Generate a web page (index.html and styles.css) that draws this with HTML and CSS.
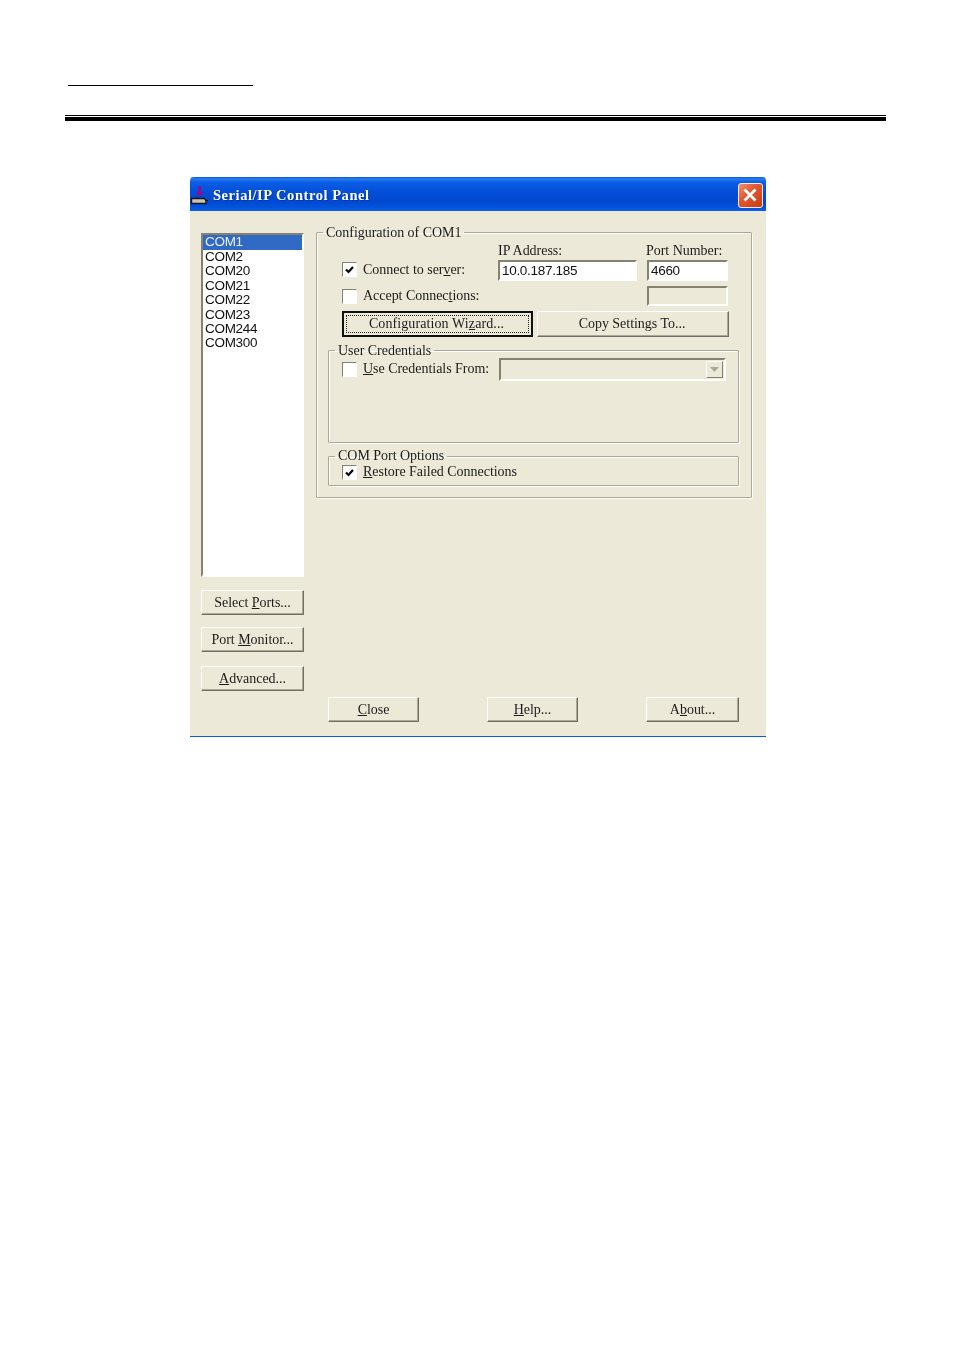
FILE: index.html
```html
<!DOCTYPE html>
<html lang="en">
<head>
<meta charset="utf-8">
<title>Serial/IP Control Panel</title>
<link rel="stylesheet" href="styles.css">
</head>
<body>
<div class="short-rule"></div>
<div class="double-rule"></div>
<div class="window">
  <div class="titlebar">
    <svg class="app-icon" viewBox="0 0 18 20" width="18" height="20">
      <path d="M8 1h3v6h2.500L9.500 12 5.500 7H8z" fill="#8b0f8f"/>
      <path d="M1.500 13.500h13l1.500 2.500v2.500H1.500z" fill="#c9c5ae" stroke="#15151f" stroke-width="1.400"/>
      <path d="M16 15.500h2" stroke="#15151f" stroke-width="1.200"/>
    </svg>
    <span class="title-text">Serial/IP Control Panel</span>
    <div class="close-btn">
      <svg viewBox="0 0 25 25" width="25" height="25">
        <path d="M7.500 7.500l9 9M16.500 7.500l-9 9" stroke="#fff" stroke-width="2.800" stroke-linecap="square"/>
      </svg>
    </div>
  </div>
  <div class="client">
    <div class="left-col">
      <div class="listbox">
        <div class="list-item selected">COM1</div>
        <div class="list-item">COM2</div>
        <div class="list-item">COM20</div>
        <div class="list-item">COM21</div>
        <div class="list-item">COM22</div>
        <div class="list-item">COM23</div>
        <div class="list-item">COM244</div>
        <div class="list-item">COM300</div>
      </div>
      <div class="btn side-one"><span>Select <u>P</u>orts...</span></div>
      <div class="btn side-two"><span>Port <u>M</u>onitor...</span></div>
      <div class="btn side-three"><span><u>A</u>dvanced...</span></div>
    </div>
    <div class="right-col">
      <fieldset class="group main-group">
        <legend>Configuration of COM1</legend>
        <div class="conn-grid">
          <div></div>
          <div class="field-label">IP Address:</div>
          <div class="field-label port-label">Port Number:</div>
          <label class="check-row row-one"><span class="check"><svg viewBox="0 0 11 11" width="11" height="11"><path d="M2 5.500l2.500 2.500 4.500-5" fill="none" stroke="#000" stroke-width="2.200"/></svg></span><span>Connect to ser<u>v</u>er:</span></label>
          <div class="input">10.0.187.185</div>
          <div class="input">4660</div>
          <label class="check-row row-two"><span class="check"></span><span>Accept Connec<u>t</u>ions:</span></label>
          <div class="row-two"></div>
          <div class="input disabled"></div>
        </div>
        <div class="wide-buttons">
          <div class="btn default"><span class="focus">Configuration Wi<u>z</u>ard...</span></div>
          <div class="btn copy"><span>Copy Settings To...</span></div>
        </div>
        <fieldset class="group cred-group">
          <legend>User Credentials</legend>
          <div class="cred-row">
            <label class="check-row"><span class="check"></span><span><u>U</u>se Credentials From:</span></label>
            <div class="combo">
              <div class="combo-arrow"><svg viewBox="0 0 9 5" width="9" height="5"><path d="M0 0h9L4.500 5z" fill="#aca899"/></svg></div>
            </div>
          </div>
        </fieldset>
        <fieldset class="group options-group">
          <legend>COM Port Options</legend>
          <label class="check-row"><span class="check"><svg viewBox="0 0 11 11" width="11" height="11"><path d="M2 5.500l2.500 2.500 4.500-5" fill="none" stroke="#000" stroke-width="2.200"/></svg></span><span><u>R</u>estore Failed Connections</span></label>
        </fieldset>
      </fieldset>
      <div class="bottom-buttons">
        <div class="btn bottom-narrow"><span><u>C</u>lose</span></div>
        <div class="btn bottom-narrow"><span><u>H</u>elp...</span></div>
        <div class="btn bottom-wide"><span>A<u>b</u>out...</span></div>
      </div>
    </div>
  </div>
</div>
</body>
</html>
```
FILE: styles.css
```css
* { box-sizing: border-box; }
html, body { margin: 0; padding: 0; background: #fff; }
body { height: 1350px; overflow: hidden; font-family: "Liberation Serif", serif; font-size: 14px; letter-spacing: -0.030px; color: #1c1c1c; }

.short-rule { width: 185px; height: 1px; margin: 85px 0 0 68px; background: #000; }
.double-rule { width: 821px; height: 6px; margin: 29px 0 0 65px; border-top: 1px solid #000; border-bottom: 4px solid #000; }

.window { width: 576px; height: 560px; margin: 56px 0 0 190px; background: #ece9d8; display: flex; flex-direction: column; border-bottom: 1px solid #0a5ce8; filter: blur(0.3px); }

.titlebar { height: 34px; flex: none; display: flex; align-items: center; padding-top: 2px; border-radius: 4px 4px 0 0;
  background: linear-gradient(to bottom, #0a5ad8 0, #2a7cf0 2px, #0a5fe6 5px, #0450d8 14px, #0048cf 24px, #0454de 31px, #0a62ea 34px); }
.app-icon { margin: 0 5px 0 0; }
.title-text { color: #fff; font-weight: bold; font-size: 14.500px; letter-spacing: 0.550px; flex: 1; text-shadow: 1px 1px 0 #0a3aa0; }
.close-btn { width: 25px; height: 25px; margin-right: 3px; border-radius: 3px; border: 1px solid #f4e8e0; background: linear-gradient(135deg, #ee9070 0, #e2592f 40%, #c93a14 100%); display: flex; align-items: center; justify-content: center; }
.close-btn svg { flex: none; }

.client { flex: 1; display: flex; padding: 13px 14px 0 11px; }
.left-col { width: 103px; flex: none; display: flex; flex-direction: column; margin-top: 9px; }
.right-col { flex: 1; margin-left: 12px; display: flex; flex-direction: column; }

.listbox { height: 344px; background: #fff; border: 2px solid; border-color: #85836f #fff #fff #85836f; }
.list-item { height: 14.400px; line-height: 14.400px; padding-left: 2px; color: #111; font-family: "Liberation Sans", sans-serif; font-size: 13.500px; letter-spacing: -0.300px; }
.list-item.selected { height: 15px; background: #316ac5; color: #e8eefc; }

.btn { display: flex; align-items: center; justify-content: center; background: #ece9d8; border: 1px solid; border-color: #fff #716f64 #716f64 #fff; box-shadow: inset -1px -1px 0 #aca899; white-space: pre; }
.side-one, .side-two, .side-three { height: 25px; width: 103px; }
.side-one { margin-top: 13px; }
.side-two { margin-top: 12px; }
.side-three { margin-top: 14px; }

.group { margin: 0; padding: 0; min-width: 0; border: 1px solid #aca899; box-shadow: 1px 1px 0 #fff, inset 1px 1px 0 #fff; border-radius: 1px; }
.group legend { padding: 1px 3px 0; margin-left: 6px; height: 16px; line-height: 16px; }
.main-group { height: 274px; }

.conn-grid { display: grid; grid-template-columns: 146px 139px 81px; column-gap: 10px; grid-template-rows: 20px 21px 26px; margin: 0 0 0 25px; align-items: center; }
.field-label { margin-top: 1px; }
.port-label { margin-left: -1px; }
.check-row { display: flex; align-items: center; white-space: pre; }
.check { width: 15px; height: 15px; margin-right: 6px; flex: none; background: #fff; border: 1px solid; border-color: #85836f #fff #fff #85836f; display: flex; align-items: center; justify-content: center; }
.row-one { margin-bottom: 2px; }
.input { height: 21px; background: #fff; border: 2px solid; border-color: #85836f #fff #fff #85836f; padding-left: 2px; line-height: 17px; font-family: "Liberation Sans", sans-serif; font-size: 13.500px; letter-spacing: -0.300px; color: #111; }
.input.disabled { background: #ece9d8; height: 20px; align-self: start; margin-top: 5px; }
.row-two { align-self: start; margin-top: 7px; }

.wide-buttons { display: flex; margin: 4px 0 0 25px; gap: 4px; }
.default { width: 191px; height: 26px; border: 2px solid #111; box-shadow: none; padding: 2px; }
.focus { flex: 1; height: 100%; display: flex; align-items: center; justify-content: center; border: 1px dotted #222; padding-right: 2px; letter-spacing: 0.100px; }
.copy { width: 192px; height: 26px; padding-right: 2px; }

.cred-group { margin: 5px 0 0 11px; width: 411px; height: 101px; }
.cred-row { display: flex; align-items: flex-start; padding-left: 13px; }
.cred-row .check-row { width: 157px; margin-top: 3px; }
.combo { width: 227px; height: 23px; border: 2px solid; border-color: #85836f #fff #fff #85836f; display: flex; justify-content: flex-end; align-items: center; padding-right: 1px; }
.combo-arrow { width: 17px; height: 17px; background: #ece9d8; border: 1px solid; border-color: #fff #85836f #85836f #fff; display: flex; align-items: center; justify-content: center; }

.group.options-group legend { padding-top: 0; }
.options-group { margin: 5px 0 0 11px; width: 411px; height: 38px; }
.options-group .check-row { padding-left: 13px; }

.bottom-buttons { display: flex; margin: 199px 0 0 12px; }
.bottom-narrow { width: 91px; height: 25px; margin-right: 68px; }
.bottom-wide { width: 93px; height: 25px; }
```
